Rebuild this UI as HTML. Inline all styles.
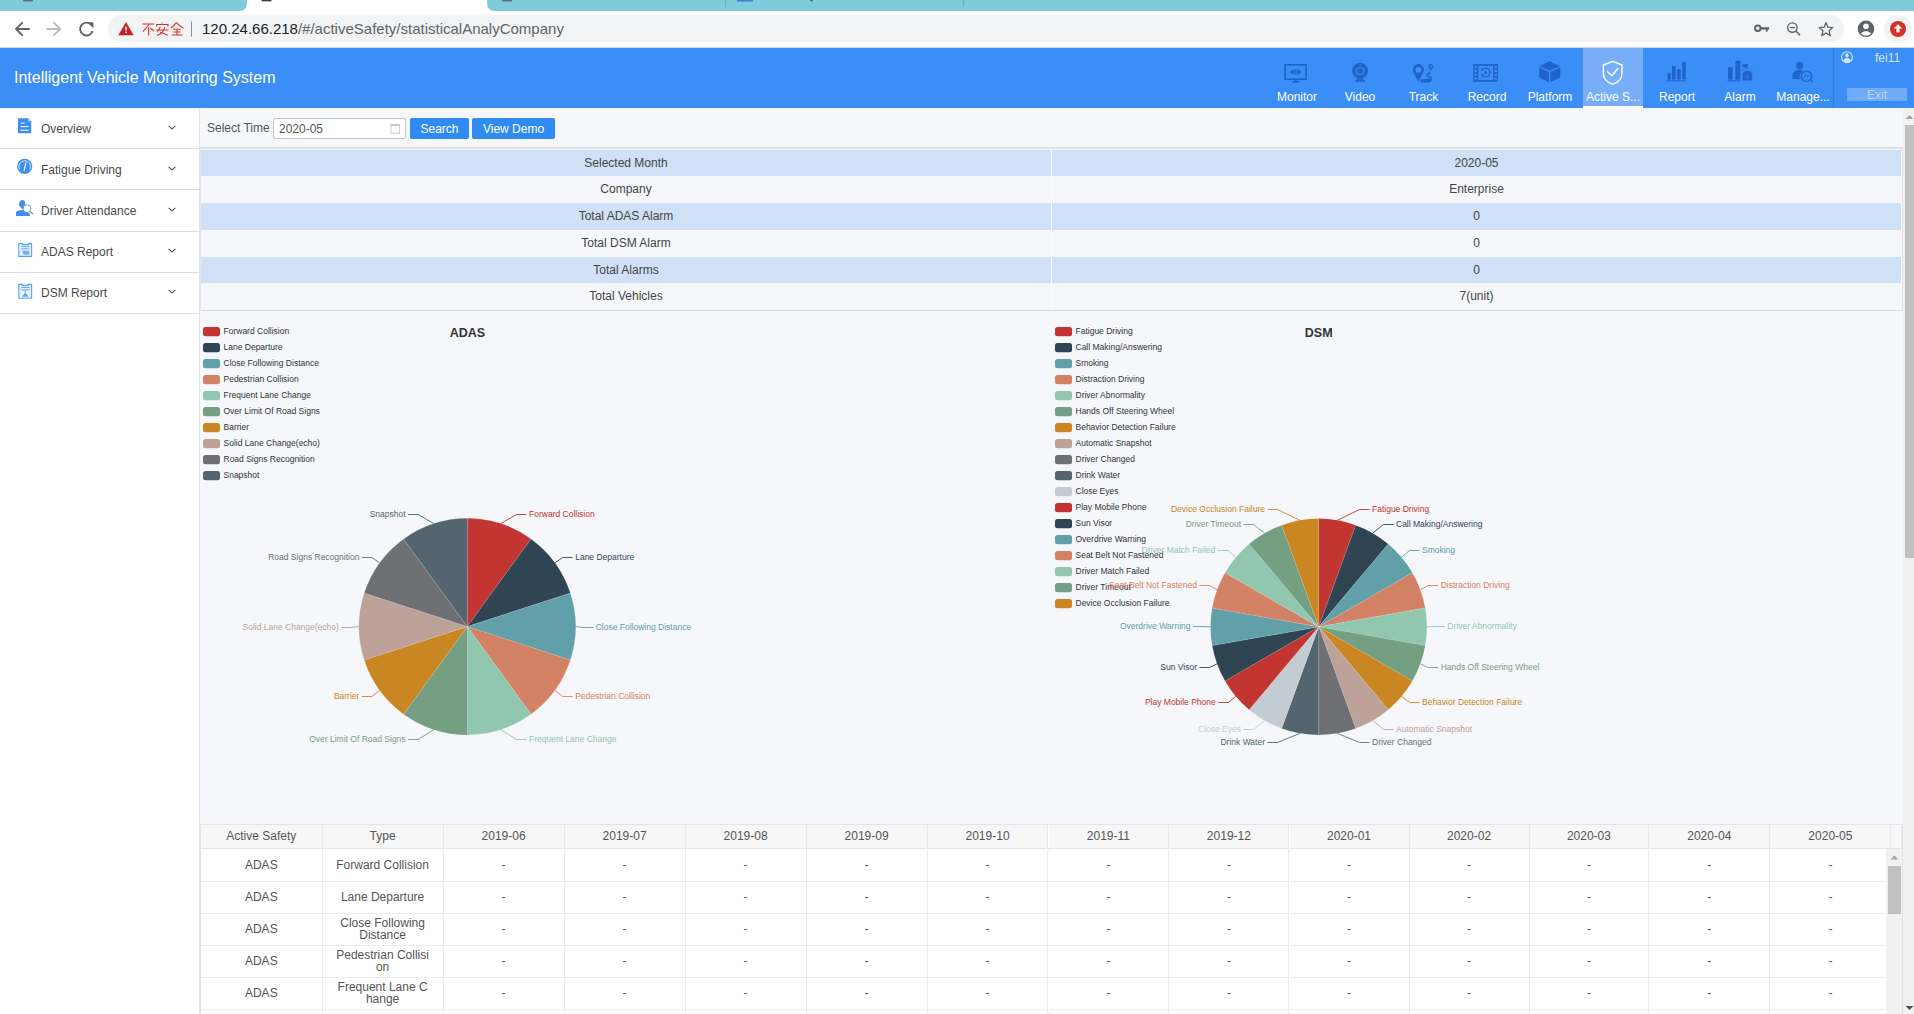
<!DOCTYPE html>
<html><head><meta charset="utf-8"><style>
*{margin:0;padding:0;box-sizing:border-box}
html,body{width:1914px;height:1014px;overflow:hidden;background:#f5f7fa;font-family:"Liberation Sans", sans-serif;position:relative}
.abs{position:absolute}
#tabs{position:absolute;left:0;top:0;width:1914px;height:11px;background:#7ecbdb}
#toolbar{position:absolute;left:0;top:11px;width:1914px;height:37px;background:#fff;border-bottom:1px solid #d6d6d6}
#omni{position:absolute;left:108px;top:15px;width:1736px;height:27px;border-radius:14px;background:#f1f3f4}
#url{position:absolute;left:202px;top:19px;font-size:15px;color:#5f6368;white-space:nowrap;line-height:20px}
#url b{font-weight:normal;color:#202124}
#header{position:absolute;left:0;top:48px;width:1914px;height:60px;background:#3a8ef6}
#title{position:absolute;left:14px;top:68px;font-size:16px;color:#fff;line-height:20px;white-space:nowrap}
.nav{position:absolute;top:48px;height:60px;width:60px;text-align:center}
.nav .lb{position:absolute;left:-10px;right:-10px;top:42px;font-size:12px;line-height:14px;color:#fff;white-space:nowrap}
.nav svg{position:absolute;left:18px;top:13px}
#side{position:absolute;left:0;top:108px;width:200px;height:906px;background:#fff;border-right:1px solid #e4e4e4}
.si{position:absolute;left:0;width:199px;height:41px;border-bottom:1px solid #dcdcdc}
.si .t{position:absolute;left:41px;top:14px;font-size:12px;line-height:14px;color:#4a4a4a}
.si .ch{position:absolute;left:168px;top:16px}
.si svg.ic{position:absolute;left:16px;top:10px}
.sr{position:absolute;left:201px;width:1700px;height:26.7px;font-size:12px;color:#444;line-height:26px}
.sr .c1{position:absolute;top:0;left:0;width:850px;text-align:center}
.sr .c2{position:absolute;left:850px;width:850px;text-align:center;border-left:1px solid #fdfdfe;height:100%}
.hc{position:absolute;top:825px;height:24px;line-height:22px;border-bottom:1px solid #e6e6e6;text-align:center;font-size:12px;color:#555;border-right:1px solid #e8e8e8;background:#f7f7f7}
.br{position:absolute;left:0;width:1886px;height:32px;overflow:hidden}
.bc{position:absolute;top:-1px;height:33px;display:flex;align-items:center;justify-content:center;text-align:center;font-size:12px;color:#555;border-right:1px solid #ececec;border-bottom:1px solid #ececec;background:#fff}
</style></head><body>
<svg class="abs" style="left:0;top:0" width="1914" height="12"><rect x="0" y="0" width="1914" height="11" fill="#fff"/><path d="M0,0 L247,0 L247,3 Q247,11 239,11 L0,11Z" fill="#7ecbdb"/><path d="M487,0 L1914,0 L1914,11 L495,11 Q487,11 487,3Z" fill="#7ecbdb"/>
<rect x="261.5" y="0" width="10" height="1.4" fill="#3c4043"/><rect x="23" y="0" width="10" height="1.4" fill="#55707a"/><rect x="502" y="0" width="10" height="1.4" fill="#55707a"/><rect x="737" y="0" width="16" height="1.6" fill="#4a7fd0"/><rect x="810" y="0" width="3" height="1.2" fill="#55707a"/><rect x="724.8" y="0" width="1" height="7" fill="#6aa9b8"/><rect x="962.8" y="0" width="1" height="7" fill="#6aa9b8"/></svg>
<div id="toolbar"></div>
<div id="omni"></div>
<svg style="position:absolute;left:0;top:0" width="1914" height="48"><path d="M29,29 L16.4,29 M22.2,22.8 L16,29 L22.2,35.2" fill="none" stroke="#5f6368" stroke-width="1.9" stroke-linecap="round" stroke-linejoin="round"/>
<path d="M47.2,29 L59.8,29 M54,22.8 L60.2,29 L54,35.2" fill="none" stroke="#bcbcbc" stroke-width="1.9" stroke-linecap="round" stroke-linejoin="round"/>
<path d="M91.6,25.2 A6.4,6.4 0 1 0 92.6,31" fill="none" stroke="#5f6368" stroke-width="1.9"/>
<path d="M87.4,22.2 L93.4,22.2 L93.4,28.2Z" fill="#5f6368"/>
<path d="M126,22.6 L133.2,35 L118.8,35Z" fill="#c5221f" stroke="#c5221f" stroke-width="0.6" stroke-linejoin="round"/>
<rect x="125.3" y="26.6" width="1.5" height="3.8" fill="#fff"/><rect x="125.3" y="31.6" width="1.5" height="1.5" fill="#fff"/>
<g fill="none" stroke="#d93025" stroke-width="1.05">
<path d="M142.4,24 L154.2,24 M149.4,24 L143,31.6 M148.6,27.2 L148.6,35.4 M150.2,28 L154,31"/>
<path d="M161.8,22.4 L162.4,23.6 M156.6,26.6 L156.6,24.4 L168,24.4 L168,26.6 M160.2,26.6 Q159.4,30 157,31.8 M156.4,30 L168.6,30 M164.6,27.4 Q163.6,33 157.2,35.4 M160,32 L167.8,35.2"/>
<path d="M176.4,22.6 Q173.4,26.4 170.6,28.2 M176.4,22.6 Q179.8,26.4 183.4,28.2 M173,29.2 L180.8,29.2 M173.4,32 L180.6,32 M171.6,35 L182.6,35 M177,29.2 L177,35"/>
</g>
<rect x="191" y="21.6" width="1" height="15" fill="#8d8f92"/>
<circle cx="1757.8" cy="28.2" r="2.8" fill="none" stroke="#5f6368" stroke-width="2"/>
<path d="M1760.6,27.2 L1769.2,27.2 L1769.2,29.6 L1767.8,29.6 L1767.8,31.4 L1765.8,31.4 L1765.8,29.6 L1760.6,29.6Z" fill="#5f6368"/>
<circle cx="1792.4" cy="27.6" r="4.7" fill="none" stroke="#5f6368" stroke-width="1.4"/>
<path d="M1790,27.6 L1794.8,27.6" stroke="#5f6368" stroke-width="1.3"/>
<path d="M1795.8,31 L1800,35.2" stroke="#5f6368" stroke-width="1.6"/>
<path d="M1826,22.6 L1827.9,27.2 L1832.8,27.6 L1829.1,30.8 L1830.2,35.6 L1826,33 L1821.8,35.6 L1822.9,30.8 L1819.2,27.6 L1824.1,27.2Z" fill="none" stroke="#5f6368" stroke-width="1.3" stroke-linejoin="round"/>
<circle cx="1866" cy="28.8" r="8.3" fill="#5f6368"/>
<circle cx="1866" cy="26.2" r="2.8" fill="#fff"/>
<path d="M1860.6,33.6 Q1866,28.6 1871.4,33.6 Q1866,38 1860.6,33.6Z" fill="#fff"/>
<circle cx="1898" cy="29" r="14" fill="#f1f3f4"/>
<circle cx="1898" cy="29" r="8" fill="#d93025"/>
<path d="M1898,24.2 L1902.2,28.4 L1899.6,28.4 L1899.6,32.6 L1896.4,32.6 L1896.4,28.4 L1893.8,28.4Z" fill="#fff"/></svg>
<div id="url"><b>120.24.66.218</b>/#/activeSafety/statisticalAnalyCompany</div>
<div id="header"></div>
<div id="title">Intelligent Vehicle Monitoring System</div>
<div class="nav" style="left:1267px"><div class="lb">Monitor</div></div>
<div class="nav" style="left:1330px"><div class="lb">Video</div></div>
<div class="nav" style="left:1393.5px"><div class="lb">Track</div></div>
<div class="nav" style="left:1457px"><div class="lb">Record</div></div>
<div class="nav" style="left:1520px"><div class="lb">Platform</div></div>
<div class="abs" style="left:1583px;top:48px;width:60px;height:60px;background:#78aef8;border-bottom:2px solid #fff"></div>
<div class="nav" style="left:1583px"><div class="lb">Active S...</div></div>
<div class="nav" style="left:1647px"><div class="lb">Report</div></div>
<div class="nav" style="left:1710px"><div class="lb">Alarm</div></div>
<div class="nav" style="left:1773px"><div class="lb">Manage...</div></div>
<svg style="position:absolute;left:0;top:0" width="1914" height="110"><g fill="none" stroke="#1f63cc" stroke-width="1.6">
<rect x="1285" y="64.8" width="21.2" height="14.4"/>
</g>
<path d="M1289.8,72 Q1295.6,66.2 1301.4,72 Q1295.6,77.8 1289.8,72Z" fill="#1f63cc"/>
<circle cx="1295.6" cy="72" r="1.9" fill="none" stroke="#3a8ef6" stroke-width="0.9"/>
<rect x="1294.6" y="79.5" width="2" height="2" fill="#1f63cc"/>
<rect x="1291.8" y="81" width="7.6" height="1.8" rx="0.8" fill="#1f63cc"/>
<circle cx="1360.1" cy="70.6" r="7.9" fill="#1f63cc"/>
<circle cx="1360.1" cy="71.2" r="3.8" fill="none" stroke="#4a93f0" stroke-width="1"/>
<circle cx="1360.1" cy="64.6" r="0.7" fill="#4a93f0"/>
<path d="M1358,77.4 L1362.2,77.4 L1363.4,79.6 L1356.8,79.6Z" fill="#1f63cc"/>
<rect x="1355.2" y="79.4" width="9.8" height="2.4" rx="0.8" fill="#1f63cc"/>
<path d="M1418.4,63.9 C1415.3,63.9 1412.8,66.4 1412.8,69.6 C1412.8,73.2 1418.4,81.4 1418.4,81.4 C1418.4,81.4 1423.9,73.2 1423.9,69.6 C1423.9,66.4 1421.5,63.9 1418.4,63.9Z" fill="#1f63cc"/>
<circle cx="1418.5" cy="69.8" r="2.9" fill="#3f90f4"/>
<path d="M1431,64.1 C1429.6,64.1 1428.4,65.2 1428.4,66.6 C1428.4,68.2 1431,70.6 1431,70.6 C1431,70.6 1433.4,68.2 1433.4,66.6 C1433.4,65.2 1432.3,64.1 1431,64.1Z" fill="#1f63cc"/>
<circle cx="1431" cy="66.4" r="1" fill="#3f90f4"/>
<path d="M1430.4,72.8 Q1425.6,74.2 1427.4,75.8 Q1431.8,77.4 1431.4,78.8" fill="none" stroke="#1f63cc" stroke-width="1.7"/>
<path d="M1420.4,79.4 L1431.8,78.2 Q1432.2,82.6 1427.6,82.6 L1420.4,82.6Z" fill="#1f63cc"/>
<rect x="1473.3" y="64" width="24.6" height="17.8" fill="#1f63cc"/>
<rect x="1478.4" y="65.8" width="14.6" height="14.2" fill="#3a8ef6"/>
<g fill="#3a8ef6">
<rect x="1474.6" y="66.2" width="2.4" height="2"/><rect x="1474.6" y="70" width="2.4" height="2"/><rect x="1474.6" y="73.8" width="2.4" height="2"/><rect x="1474.6" y="77.6" width="2.4" height="2"/>
<rect x="1494.4" y="66.2" width="2.4" height="2"/><rect x="1494.4" y="70" width="2.4" height="2"/><rect x="1494.4" y="73.8" width="2.4" height="2"/><rect x="1494.4" y="77.6" width="2.4" height="2"/>
</g>
<path d="M1482.4,69.4 A4.4,4.4 0 1 1 1481.6,74.4" fill="none" stroke="#1f63cc" stroke-width="1.3"/>
<path d="M1480.6,68.2 L1483.6,69.2 L1481.4,71.2Z" fill="#1f63cc"/>
<path d="M1484.4,70.6 L1487.4,72.5 L1484.4,74.4Z" fill="#1f63cc"/>
<path d="M1549.7,61.2 L1560,66.2 L1549.7,70.6 L1539.2,66.2Z" fill="#1f63cc"/>
<path d="M1539.2,67.6 L1549,72 L1549,82.2 L1539.6,77.6 Q1539,77.2 1539,76.4Z" fill="#1f63cc"/>
<path d="M1560.2,67.6 L1550.4,72 L1550.4,82.2 L1559.8,77.6 Q1560.4,77.2 1560.4,76.4Z" fill="#1f63cc"/>
<path d="M1612.7,61.4 L1622,65 L1622,73.2 C1622,78.8 1617.6,82.6 1612.7,84.2 C1607.8,82.6 1603.4,78.8 1603.4,73.2 L1603.4,65Z" fill="none" stroke="#fff" stroke-width="1.4" stroke-linejoin="round"/>
<path d="M1607.6,71.8 L1611.8,75.8 L1617.8,68.6" fill="none" stroke="#fff" stroke-width="1.5" stroke-linecap="round" stroke-linejoin="round"/>
<g fill="#1f63cc">
<rect x="1667.4" y="73.2" width="3.4" height="6.3" rx="0.8"/>
<rect x="1672" y="66" width="3.6" height="13.5" rx="0.8"/>
<rect x="1677.2" y="69" width="3.6" height="10.5" rx="0.8"/>
<rect x="1682.2" y="61.9" width="3.6" height="17.6" rx="0.8"/>
<rect x="1666.6" y="80.3" width="19.6" height="1.1"/>
</g>
<g fill="#1f63cc">
<rect x="1728" y="67" width="4.6" height="12.6"/>
<rect x="1735.4" y="61" width="5" height="18.6"/>
<rect x="1742.4" y="64" width="5.4" height="3.6"/>
<path d="M1742.4,80.6 L1742.4,75.6 A4.9,4.9 0 0 1 1752.2,75.6 L1752.2,80.6Z"/>
<rect x="1727.6" y="80.3" width="13" height="1.2"/>
</g>
<path d="M1747.8,73.6 L1746.2,76.6 L1748,76.6 L1746.8,79" fill="none" stroke="#3a8ef6" stroke-width="0.8"/>
<g stroke="#1f63cc" stroke-width="0.9"><path d="M1742,69.6 L1743.2,70.8 M1752.8,69.6 L1751.6,70.8 M1747.3,68 L1747.3,69.4"/></g>
<g fill="#1f63cc">
<circle cx="1799.6" cy="65.4" r="3.6"/>
<path d="M1792.4,79 L1792.4,75.2 Q1792.4,70.4 1799.6,69.8 Q1802.6,70 1803.6,71 A6.6,6.6 0 0 0 1799.8,79Z"/>
</g>
<circle cx="1806.4" cy="76.4" r="5.2" fill="none" stroke="#1f63cc" stroke-width="1.4"/>
<path d="M1803.6,77.6 L1805.6,74.8 L1808,76.6 L1809.4,75" fill="none" stroke="#1f63cc" stroke-width="0.9"/>
<path d="M1810.2,80.2 L1812.8,82" stroke="#1f63cc" stroke-width="1.4"/>
<rect x="1833" y="48" width="1" height="60" fill="#2f7ee0"/>
<circle cx="1847" cy="57.2" r="5.4" fill="none" stroke="#d3e6fd" stroke-width="1.1"/>
<ellipse cx="1847" cy="55.4" rx="1.7" ry="2.1" fill="#d3e6fd"/>
<path d="M1843.2,61.2 Q1843.6,58.4 1847,58 Q1850.4,58.4 1850.8,61.2 Q1847,63.6 1843.2,61.2Z" fill="#d3e6fd"/></svg>
<div class="abs" style="left:1875px;top:51px;font-size:12px;line-height:14px;color:#d3e6fd">fei11</div>
<div class="abs" style="left:1847px;top:88px;width:60px;height:13px;background:#72abf8;color:#b9d6fb;font-size:12px;line-height:15px;text-align:center">Exit</div>
<div id="side">
 <div class="si" style="top:0"><span class="t">Overview</span></div>
 <div class="si" style="top:41px"><span class="t">Fatigue Driving</span></div>
 <div class="si" style="top:82px;height:42px"><span class="t">Driver Attendance</span></div>
 <div class="si" style="top:124px"><span class="t" style="top:13px">ADAS Report</span></div>
 <div class="si" style="top:165px"><span class="t" style="top:13px">DSM Report</span></div>
</div>
<div class="abs" style="left:207px;top:121px;font-size:12px;line-height:14px;color:#555">Select Time</div>
<div class="abs" style="left:273px;top:118px;width:133px;height:21px;border:1px solid #c0c4cc;border-radius:2px;background:#fff"></div>
<svg style="position:absolute;left:0;top:108px;overflow:visible" width="200" height="200"><g transform="translate(0,-108)"><path d="M18,118.2 L28.2,118.2 L31.2,121.2 L31.2,133.2 L18,133.2Z" fill="#3d8ef3"/>
<path d="M28,118.2 L28,121.4 L31.2,121.4" fill="#a9cffb"/>
<g fill="#fff"><rect x="20.6" y="122.6" width="4" height="1"/><rect x="20.6" y="126.1" width="8" height="1"/><rect x="20.6" y="129.8" width="8" height="1"/></g>
<circle cx="24.7" cy="166.4" r="7.6" fill="#3d8ef3"/>
<path d="M19.6,169.4 A5.8,5.8 0 1 1 29.8,169.4" fill="none" stroke="#fff" stroke-width="0.8"/>
<path d="M24.2,170.4 L25.8,163" stroke="#fff" stroke-width="1.2" stroke-linecap="round"/>
<g fill="#3d8ef3">
<path d="M19.2,205.6 Q19,200.2 22.2,200 Q25,200 25,202.6 L25,206.2 Q24,208.6 22.6,209.6Z"/>
<path d="M16,216 L16,212.4 Q16.4,210.8 19,210.4 L23.4,209.8 Q25.6,212 29,212.6 L30.2,216Z"/>
</g>
<circle cx="27" cy="208.6" r="3.9" fill="#fff" stroke="#6a8fc8" stroke-width="0.9"/>
<path d="M29.8,211.6 L33,213.8" stroke="#5a6f99" stroke-width="1.1"/>
<path d="M18.8,243.6 L22.4,243.6 L22.4,244.6 L28.4,244.6 L28.4,243.6 L31.6,243.6 L31.6,256.4 L18.8,256.4Z" fill="#e8f3ff" stroke="#5a9ef5" stroke-width="1.1"/>
<g fill="#5a9ef5"><rect x="21.4" y="246.2" width="8" height="0.9"/><rect x="21.4" y="248.4" width="8" height="0.9"/><rect x="21.8" y="250.6" width="3" height="0.9"/><path d="M24.2,250.8 L29.2,250.8 L29.4,254.8 L23.6,254.8 L22.6,252.2Z" opacity="0.8"/></g>
<path d="M18.8,284.4 L22.4,284.4 L22.4,285.4 L28.4,285.4 L28.4,284.4 L31.6,284.4 L31.6,298.2 L18.8,298.2Z" fill="#e8f3ff" stroke="#5a9ef5" stroke-width="1.1"/>
<g fill="#5a9ef5"><rect x="21.2" y="287" width="8.4" height="0.9"/><rect x="21.2" y="289.4" width="8.4" height="1"/><path d="M24.8,290.4 L25.6,290.4 L25.6,293 L28.4,296.8 L22,296.8 L24.8,293Z"/></g>
<path d="M168.6,125.8 L172,129.0 L175.4,125.8" fill="none" stroke="#555" stroke-width="1.1"/>
<path d="M168.6,166.8 L172,170.0 L175.4,166.8" fill="none" stroke="#555" stroke-width="1.1"/>
<path d="M168.6,207.8 L172,211.0 L175.4,207.8" fill="none" stroke="#555" stroke-width="1.1"/>
<path d="M168.6,248.8 L172,252.0 L175.4,248.8" fill="none" stroke="#555" stroke-width="1.1"/>
<path d="M168.6,289.8 L172,293.0 L175.4,289.8" fill="none" stroke="#555" stroke-width="1.1"/></g></svg>
<svg class="abs" style="left:390px;top:123px" width="11" height="11"><rect x="1" y="1.5" width="8.6" height="8.6" fill="none" stroke="#c8c8c8" stroke-width="0.9"/><rect x="1" y="1.5" width="8.6" height="1.6" fill="#c8c8c8"/></svg>
<div class="abs" style="left:279px;top:122px;font-size:12px;line-height:14px;color:#555">2020-05</div>
<div class="abs" style="left:410px;top:118px;width:59px;height:21px;border-radius:2px;background:#2f8bef;color:#fff;font-size:12px;line-height:23px;text-align:center">Search</div>
<div class="abs" style="left:472px;top:118px;width:83px;height:21px;border-radius:2px;background:#2f8bef;color:#fff;font-size:12px;line-height:23px;text-align:center">View Demo</div>
<div class="abs" style="left:200px;top:147px;width:1703px;height:2px;background:#dcdfe4"></div>
<div class="abs" style="left:200px;top:149px;width:1703px;height:162px;border:1px solid #e3e5e8;border-top:0;border-bottom-color:#dcdcdc"></div>
<div class="sr" style="top:149.7px;background:#cfe0f7"><span class="c1">Selected Month</span><span class="c2">2020-05</span></div>
<div class="sr" style="top:176.4px;background:#f5f7fa"><span class="c1">Company</span><span class="c2">Enterprise</span></div>
<div class="sr" style="top:203.1px;background:#cfe0f7"><span class="c1">Total ADAS Alarm</span><span class="c2">0</span></div>
<div class="sr" style="top:229.8px;background:#f5f7fa"><span class="c1">Total DSM Alarm</span><span class="c2">0</span></div>
<div class="sr" style="top:256.5px;background:#cfe0f7"><span class="c1">Total Alarms</span><span class="c2">0</span></div>
<div class="sr" style="top:283.2px;background:#f5f7fa"><span class="c1">Total Vehicles</span><span class="c2">7(unit)</span></div>
<svg style="position:absolute;left:0;top:0" width="1914" height="1014" font-family='"Liberation Sans", sans-serif' font-size="8.5">
<g><rect x="203" y="327" width="17" height="9.3" rx="2.5" fill="#c23531"/>
<text x="223.5" y="333.9" fill="#333">Forward Collision</text>
<rect x="203" y="343" width="17" height="9.3" rx="2.5" fill="#2f4554"/>
<text x="223.5" y="349.9" fill="#333">Lane Departure</text>
<rect x="203" y="359" width="17" height="9.3" rx="2.5" fill="#61a0a8"/>
<text x="223.5" y="365.9" fill="#333">Close Following Distance</text>
<rect x="203" y="375" width="17" height="9.3" rx="2.5" fill="#d48265"/>
<text x="223.5" y="381.9" fill="#333">Pedestrian Collision</text>
<rect x="203" y="391" width="17" height="9.3" rx="2.5" fill="#91c7ae"/>
<text x="223.5" y="397.9" fill="#333">Frequent Lane Change</text>
<rect x="203" y="407" width="17" height="9.3" rx="2.5" fill="#749f83"/>
<text x="223.5" y="413.9" fill="#333">Over Limit Of Road Signs</text>
<rect x="203" y="423" width="17" height="9.3" rx="2.5" fill="#ca8622"/>
<text x="223.5" y="429.9" fill="#333">Barrier</text>
<rect x="203" y="439" width="17" height="9.3" rx="2.5" fill="#bda29a"/>
<text x="223.5" y="445.9" fill="#333">Solid Lane Change(echo)</text>
<rect x="203" y="455" width="17" height="9.3" rx="2.5" fill="#6e7074"/>
<text x="223.5" y="461.9" fill="#333">Road Signs Recognition</text>
<rect x="203" y="471" width="17" height="9.3" rx="2.5" fill="#546570"/>
<text x="223.5" y="477.9" fill="#333">Snapshot</text></g>
<text x="467.5" y="336.5" font-size="12.5" font-weight="bold" fill="#333" text-anchor="middle">ADAS</text>
<g><path d="M467.30,626.60L467.30,518.20A108.4,108.4 0 0 1 531.02,538.90Z" fill="#c23531" stroke="#fff" stroke-width="0.3" stroke-opacity="0.35"/>
<path d="M467.30,626.60L531.02,538.90A108.4,108.4 0 0 1 570.39,593.10Z" fill="#2f4554" stroke="#fff" stroke-width="0.3" stroke-opacity="0.35"/>
<path d="M467.30,626.60L570.39,593.10A108.4,108.4 0 0 1 570.39,660.10Z" fill="#61a0a8" stroke="#fff" stroke-width="0.3" stroke-opacity="0.35"/>
<path d="M467.30,626.60L570.39,660.10A108.4,108.4 0 0 1 531.02,714.30Z" fill="#d48265" stroke="#fff" stroke-width="0.3" stroke-opacity="0.35"/>
<path d="M467.30,626.60L531.02,714.30A108.4,108.4 0 0 1 467.30,735.00Z" fill="#91c7ae" stroke="#fff" stroke-width="0.3" stroke-opacity="0.35"/>
<path d="M467.30,626.60L467.30,735.00A108.4,108.4 0 0 1 403.58,714.30Z" fill="#749f83" stroke="#fff" stroke-width="0.3" stroke-opacity="0.35"/>
<path d="M467.30,626.60L403.58,714.30A108.4,108.4 0 0 1 364.21,660.10Z" fill="#ca8622" stroke="#fff" stroke-width="0.3" stroke-opacity="0.35"/>
<path d="M467.30,626.60L364.21,660.10A108.4,108.4 0 0 1 364.21,593.10Z" fill="#bda29a" stroke="#fff" stroke-width="0.3" stroke-opacity="0.35"/>
<path d="M467.30,626.60L364.21,593.10A108.4,108.4 0 0 1 403.58,538.90Z" fill="#6e7074" stroke="#fff" stroke-width="0.3" stroke-opacity="0.35"/>
<path d="M467.30,626.60L403.58,538.90A108.4,108.4 0 0 1 467.30,518.20Z" fill="#546570" stroke="#fff" stroke-width="0.3" stroke-opacity="0.35"/>
<polyline points="500.80,523.51 516.50,514.50 526.50,514.50" fill="none" stroke="#c23531" stroke-width="0.9"/>
<text x="529.00" y="516.99" fill="#c23531" text-anchor="start">Forward Collision</text>
<polyline points="555.00,562.88 562.70,557.50 572.70,557.50" fill="none" stroke="#2f4554" stroke-width="0.9"/>
<text x="575.20" y="560.01" fill="#2f4554" text-anchor="start">Lane Departure</text>
<polyline points="575.70,626.60 583.20,627.50 593.20,627.50" fill="none" stroke="#61a0a8" stroke-width="0.9"/>
<text x="595.70" y="629.60" fill="#61a0a8" text-anchor="start">Close Following Distance</text>
<polyline points="555.00,690.32 562.70,696.50 572.70,696.50" fill="none" stroke="#d48265" stroke-width="0.9"/>
<text x="575.20" y="699.19" fill="#d48265" text-anchor="start">Pedestrian Collision</text>
<polyline points="500.80,729.69 516.50,739.50 526.50,739.50" fill="none" stroke="#91c7ae" stroke-width="0.9"/>
<text x="529.00" y="742.21" fill="#91c7ae" text-anchor="start">Frequent Lane Change</text>
<polyline points="433.80,729.69 418.10,739.50 408.10,739.50" fill="none" stroke="#749f83" stroke-width="0.9"/>
<text x="405.60" y="742.21" fill="#749f83" text-anchor="end">Over Limit Of Road Signs</text>
<polyline points="379.60,690.32 371.90,696.50 361.90,696.50" fill="none" stroke="#ca8622" stroke-width="0.9"/>
<text x="359.40" y="699.19" fill="#ca8622" text-anchor="end">Barrier</text>
<polyline points="358.90,626.60 351.40,627.50 341.40,627.50" fill="none" stroke="#bda29a" stroke-width="0.9"/>
<text x="338.90" y="629.60" fill="#bda29a" text-anchor="end">Solid Lane Change(echo)</text>
<polyline points="379.60,562.88 371.90,557.50 361.90,557.50" fill="none" stroke="#6e7074" stroke-width="0.9"/>
<text x="359.40" y="560.01" fill="#6e7074" text-anchor="end">Road Signs Recognition</text>
<polyline points="433.80,523.51 418.10,514.50 408.10,514.50" fill="none" stroke="#546570" stroke-width="0.9"/>
<text x="405.60" y="516.99" fill="#546570" text-anchor="end">Snapshot</text></g>
<g><rect x="1055" y="327" width="17" height="9.3" rx="2.5" fill="#c23531"/>
<text x="1075.5" y="333.9" fill="#333">Fatigue Driving</text>
<rect x="1055" y="343" width="17" height="9.3" rx="2.5" fill="#2f4554"/>
<text x="1075.5" y="349.9" fill="#333">Call Making/Answering</text>
<rect x="1055" y="359" width="17" height="9.3" rx="2.5" fill="#61a0a8"/>
<text x="1075.5" y="365.9" fill="#333">Smoking</text>
<rect x="1055" y="375" width="17" height="9.3" rx="2.5" fill="#d48265"/>
<text x="1075.5" y="381.9" fill="#333">Distraction Driving</text>
<rect x="1055" y="391" width="17" height="9.3" rx="2.5" fill="#91c7ae"/>
<text x="1075.5" y="397.9" fill="#333">Driver Abnormality</text>
<rect x="1055" y="407" width="17" height="9.3" rx="2.5" fill="#749f83"/>
<text x="1075.5" y="413.9" fill="#333">Hands Off Steering Wheel</text>
<rect x="1055" y="423" width="17" height="9.3" rx="2.5" fill="#ca8622"/>
<text x="1075.5" y="429.9" fill="#333">Behavior Detection Failure</text>
<rect x="1055" y="439" width="17" height="9.3" rx="2.5" fill="#bda29a"/>
<text x="1075.5" y="445.9" fill="#333">Automatic Snapshot</text>
<rect x="1055" y="455" width="17" height="9.3" rx="2.5" fill="#6e7074"/>
<text x="1075.5" y="461.9" fill="#333">Driver Changed</text>
<rect x="1055" y="471" width="17" height="9.3" rx="2.5" fill="#546570"/>
<text x="1075.5" y="477.9" fill="#333">Drink Water</text>
<rect x="1055" y="487" width="17" height="9.3" rx="2.5" fill="#c4ccd3"/>
<text x="1075.5" y="493.9" fill="#333">Close Eyes</text>
<rect x="1055" y="503" width="17" height="9.3" rx="2.5" fill="#c23531"/>
<text x="1075.5" y="509.9" fill="#333">Play Mobile Phone</text>
<rect x="1055" y="519" width="17" height="9.3" rx="2.5" fill="#2f4554"/>
<text x="1075.5" y="525.9" fill="#333">Sun Visor</text>
<rect x="1055" y="535" width="17" height="9.3" rx="2.5" fill="#61a0a8"/>
<text x="1075.5" y="541.9" fill="#333">Overdrive Warning</text>
<rect x="1055" y="551" width="17" height="9.3" rx="2.5" fill="#d48265"/>
<text x="1075.5" y="557.9" fill="#333">Seat Belt Not Fastened</text>
<rect x="1055" y="567" width="17" height="9.3" rx="2.5" fill="#91c7ae"/>
<text x="1075.5" y="573.9" fill="#333">Driver Match Failed</text>
<rect x="1055" y="583" width="17" height="9.3" rx="2.5" fill="#749f83"/>
<text x="1075.5" y="589.9" fill="#333">Driver Timeout</text>
<rect x="1055" y="599" width="17" height="9.3" rx="2.5" fill="#ca8622"/>
<text x="1075.5" y="605.9" fill="#333">Device Occlusion Failure</text></g>
<text x="1318.7" y="336.5" font-size="12.5" font-weight="bold" fill="#333" text-anchor="middle">DSM</text>
<g><path d="M1318.70,626.80L1318.70,518.60A108.2,108.2 0 0 1 1355.71,525.13Z" fill="#c23531" stroke="#fff" stroke-width="0.3" stroke-opacity="0.35"/>
<path d="M1318.70,626.80L1355.71,525.13A108.2,108.2 0 0 1 1388.25,543.91Z" fill="#2f4554" stroke="#fff" stroke-width="0.3" stroke-opacity="0.35"/>
<path d="M1318.70,626.80L1388.25,543.91A108.2,108.2 0 0 1 1412.40,572.70Z" fill="#61a0a8" stroke="#fff" stroke-width="0.3" stroke-opacity="0.35"/>
<path d="M1318.70,626.80L1412.40,572.70A108.2,108.2 0 0 1 1425.26,608.01Z" fill="#d48265" stroke="#fff" stroke-width="0.3" stroke-opacity="0.35"/>
<path d="M1318.70,626.80L1425.26,608.01A108.2,108.2 0 0 1 1425.26,645.59Z" fill="#91c7ae" stroke="#fff" stroke-width="0.3" stroke-opacity="0.35"/>
<path d="M1318.70,626.80L1425.26,645.59A108.2,108.2 0 0 1 1412.40,680.90Z" fill="#749f83" stroke="#fff" stroke-width="0.3" stroke-opacity="0.35"/>
<path d="M1318.70,626.80L1412.40,680.90A108.2,108.2 0 0 1 1388.25,709.69Z" fill="#ca8622" stroke="#fff" stroke-width="0.3" stroke-opacity="0.35"/>
<path d="M1318.70,626.80L1388.25,709.69A108.2,108.2 0 0 1 1355.71,728.47Z" fill="#bda29a" stroke="#fff" stroke-width="0.3" stroke-opacity="0.35"/>
<path d="M1318.70,626.80L1355.71,728.47A108.2,108.2 0 0 1 1318.70,735.00Z" fill="#6e7074" stroke="#fff" stroke-width="0.3" stroke-opacity="0.35"/>
<path d="M1318.70,626.80L1318.70,735.00A108.2,108.2 0 0 1 1281.69,728.47Z" fill="#546570" stroke="#fff" stroke-width="0.3" stroke-opacity="0.35"/>
<path d="M1318.70,626.80L1281.69,728.47A108.2,108.2 0 0 1 1249.15,709.69Z" fill="#c4ccd3" stroke="#fff" stroke-width="0.3" stroke-opacity="0.35"/>
<path d="M1318.70,626.80L1249.15,709.69A108.2,108.2 0 0 1 1225.00,680.90Z" fill="#c23531" stroke="#fff" stroke-width="0.3" stroke-opacity="0.35"/>
<path d="M1318.70,626.80L1225.00,680.90A108.2,108.2 0 0 1 1212.14,645.59Z" fill="#2f4554" stroke="#fff" stroke-width="0.3" stroke-opacity="0.35"/>
<path d="M1318.70,626.80L1212.14,645.59A108.2,108.2 0 0 1 1212.14,608.01Z" fill="#61a0a8" stroke="#fff" stroke-width="0.3" stroke-opacity="0.35"/>
<path d="M1318.70,626.80L1212.14,608.01A108.2,108.2 0 0 1 1225.00,572.70Z" fill="#d48265" stroke="#fff" stroke-width="0.3" stroke-opacity="0.35"/>
<path d="M1318.70,626.80L1225.00,572.70A108.2,108.2 0 0 1 1249.15,543.91Z" fill="#91c7ae" stroke="#fff" stroke-width="0.3" stroke-opacity="0.35"/>
<path d="M1318.70,626.80L1249.15,543.91A108.2,108.2 0 0 1 1281.69,525.13Z" fill="#749f83" stroke="#fff" stroke-width="0.3" stroke-opacity="0.35"/>
<path d="M1318.70,626.80L1281.69,525.13A108.2,108.2 0 0 1 1318.70,518.60Z" fill="#ca8622" stroke="#fff" stroke-width="0.3" stroke-opacity="0.35"/>
<polyline points="1337.49,520.24 1359.50,509.50 1369.50,509.50" fill="none" stroke="#c23531" stroke-width="0.9"/>
<text x="1372.00" y="512.40" fill="#c23531" text-anchor="start">Fatigue Driving</text>
<polyline points="1372.80,533.10 1383.50,524.50 1393.50,524.50" fill="none" stroke="#2f4554" stroke-width="0.9"/>
<text x="1396.00" y="526.50" fill="#2f4554" text-anchor="start">Call Making/Answering</text>
<polyline points="1401.59,557.25 1409.50,550.50 1419.50,550.50" fill="none" stroke="#61a0a8" stroke-width="0.9"/>
<text x="1422.00" y="553.20" fill="#61a0a8" text-anchor="start">Smoking</text>
<polyline points="1420.37,589.79 1428.20,585.50 1438.20,585.50" fill="none" stroke="#d48265" stroke-width="0.9"/>
<text x="1440.70" y="588.30" fill="#d48265" text-anchor="start">Distraction Driving</text>
<polyline points="1426.90,626.80 1434.80,626.50 1444.80,626.50" fill="none" stroke="#91c7ae" stroke-width="0.9"/>
<text x="1447.30" y="629.00" fill="#91c7ae" text-anchor="start">Driver Abnormality</text>
<polyline points="1420.37,663.81 1428.20,667.50 1438.20,667.50" fill="none" stroke="#749f83" stroke-width="0.9"/>
<text x="1440.70" y="669.70" fill="#749f83" text-anchor="start">Hands Off Steering Wheel</text>
<polyline points="1401.59,696.35 1409.50,702.50 1419.50,702.50" fill="none" stroke="#ca8622" stroke-width="0.9"/>
<text x="1422.00" y="704.90" fill="#ca8622" text-anchor="start">Behavior Detection Failure</text>
<polyline points="1372.80,720.50 1383.50,729.50 1393.50,729.50" fill="none" stroke="#bda29a" stroke-width="0.9"/>
<text x="1396.00" y="731.80" fill="#bda29a" text-anchor="start">Automatic Snapshot</text>
<polyline points="1337.49,733.36 1359.50,742.50 1369.50,742.50" fill="none" stroke="#6e7074" stroke-width="0.9"/>
<text x="1372.00" y="745.30" fill="#6e7074" text-anchor="start">Driver Changed</text>
<polyline points="1299.91,733.36 1277.50,742.50 1267.50,742.50" fill="none" stroke="#546570" stroke-width="0.9"/>
<text x="1265.00" y="745.30" fill="#546570" text-anchor="end">Drink Water</text>
<polyline points="1264.60,720.50 1253.50,729.50 1243.50,729.50" fill="none" stroke="#c4ccd3" stroke-width="0.9"/>
<text x="1241.00" y="731.80" fill="#c4ccd3" text-anchor="end">Close Eyes</text>
<polyline points="1235.81,696.35 1228.30,702.50 1218.30,702.50" fill="none" stroke="#c23531" stroke-width="0.9"/>
<text x="1215.80" y="704.90" fill="#c23531" text-anchor="end">Play Mobile Phone</text>
<polyline points="1217.03,663.81 1209.50,667.50 1199.50,667.50" fill="none" stroke="#2f4554" stroke-width="0.9"/>
<text x="1197.00" y="669.70" fill="#2f4554" text-anchor="end">Sun Visor</text>
<polyline points="1210.50,626.80 1203.00,626.50 1193.00,626.50" fill="none" stroke="#61a0a8" stroke-width="0.9"/>
<text x="1190.50" y="629.00" fill="#61a0a8" text-anchor="end">Overdrive Warning</text>
<polyline points="1217.03,589.79 1209.50,585.50 1199.50,585.50" fill="none" stroke="#d48265" stroke-width="0.9"/>
<text x="1197.00" y="588.30" fill="#d48265" text-anchor="end">Seat Belt Not Fastened</text>
<polyline points="1235.81,557.25 1227.80,550.50 1217.80,550.50" fill="none" stroke="#91c7ae" stroke-width="0.9"/>
<text x="1215.30" y="553.20" fill="#91c7ae" text-anchor="end">Driver Match Failed</text>
<polyline points="1264.60,533.10 1253.50,524.50 1243.50,524.50" fill="none" stroke="#749f83" stroke-width="0.9"/>
<text x="1241.00" y="526.50" fill="#749f83" text-anchor="end">Driver Timeout</text>
<polyline points="1299.91,520.24 1277.50,509.50 1267.50,509.50" fill="none" stroke="#ca8622" stroke-width="0.9"/>
<text x="1265.00" y="512.40" fill="#ca8622" text-anchor="end">Device Occlusion Failure</text></g>
</svg>
<div class="abs" style="left:200px;top:824px;width:1703px;height:190px;border:1px solid #e3e3e3;background:#fff"></div>
<div class="hc" style="left:201.0px;width:121.6px">Active Safety</div><div class="hc" style="left:322.6px;width:121.0px">Type</div><div class="hc" style="left:443.6px;width:121.0px">2019-06</div><div class="hc" style="left:564.6px;width:121.0px">2019-07</div><div class="hc" style="left:685.6px;width:121.0px">2019-08</div><div class="hc" style="left:806.6px;width:121.0px">2019-09</div><div class="hc" style="left:927.6px;width:120.9px">2019-10</div><div class="hc" style="left:1048.5px;width:120.8px">2019-11</div><div class="hc" style="left:1169.3px;width:120.2px">2019-12</div><div class="hc" style="left:1289.5px;width:120.0px">2020-01</div><div class="hc" style="left:1409.5px;width:120.1px">2020-02</div><div class="hc" style="left:1529.6px;width:119.7px">2020-03</div><div class="hc" style="left:1649.3px;width:121.0px">2020-04</div><div class="hc" style="left:1770.3px;width:121.2px">2020-05</div>
<div class="hc" style="left:1891px;width:11px"></div>
<div class="br" style="top:850.0px"><div class="bc" style="left:201.0px;width:121.6px">ADAS</div><div class="bc" style="left:322.6px;width:121.0px;line-height:11.5px;padding-top:1px">Forward Collision</div><div class="bc" style="left:443.6px;width:121.0px">-</div><div class="bc" style="left:564.6px;width:121.0px">-</div><div class="bc" style="left:685.6px;width:121.0px">-</div><div class="bc" style="left:806.6px;width:121.0px">-</div><div class="bc" style="left:927.6px;width:120.9px">-</div><div class="bc" style="left:1048.5px;width:120.8px">-</div><div class="bc" style="left:1169.3px;width:120.2px">-</div><div class="bc" style="left:1289.5px;width:120.0px">-</div><div class="bc" style="left:1409.5px;width:120.1px">-</div><div class="bc" style="left:1529.6px;width:119.7px">-</div><div class="bc" style="left:1649.3px;width:121.0px">-</div><div class="bc" style="left:1770.3px;width:121.2px">-</div></div>
<div class="br" style="top:882.0px"><div class="bc" style="left:201.0px;width:121.6px">ADAS</div><div class="bc" style="left:322.6px;width:121.0px;line-height:11.5px;padding-top:1px">Lane Departure</div><div class="bc" style="left:443.6px;width:121.0px">-</div><div class="bc" style="left:564.6px;width:121.0px">-</div><div class="bc" style="left:685.6px;width:121.0px">-</div><div class="bc" style="left:806.6px;width:121.0px">-</div><div class="bc" style="left:927.6px;width:120.9px">-</div><div class="bc" style="left:1048.5px;width:120.8px">-</div><div class="bc" style="left:1169.3px;width:120.2px">-</div><div class="bc" style="left:1289.5px;width:120.0px">-</div><div class="bc" style="left:1409.5px;width:120.1px">-</div><div class="bc" style="left:1529.6px;width:119.7px">-</div><div class="bc" style="left:1649.3px;width:121.0px">-</div><div class="bc" style="left:1770.3px;width:121.2px">-</div></div>
<div class="br" style="top:914.0px"><div class="bc" style="left:201.0px;width:121.6px">ADAS</div><div class="bc" style="left:322.6px;width:121.0px;line-height:11.5px;padding-top:1px">Close Following<br>Distance</div><div class="bc" style="left:443.6px;width:121.0px">-</div><div class="bc" style="left:564.6px;width:121.0px">-</div><div class="bc" style="left:685.6px;width:121.0px">-</div><div class="bc" style="left:806.6px;width:121.0px">-</div><div class="bc" style="left:927.6px;width:120.9px">-</div><div class="bc" style="left:1048.5px;width:120.8px">-</div><div class="bc" style="left:1169.3px;width:120.2px">-</div><div class="bc" style="left:1289.5px;width:120.0px">-</div><div class="bc" style="left:1409.5px;width:120.1px">-</div><div class="bc" style="left:1529.6px;width:119.7px">-</div><div class="bc" style="left:1649.3px;width:121.0px">-</div><div class="bc" style="left:1770.3px;width:121.2px">-</div></div>
<div class="br" style="top:946.0px"><div class="bc" style="left:201.0px;width:121.6px">ADAS</div><div class="bc" style="left:322.6px;width:121.0px;line-height:11.5px;padding-top:1px">Pedestrian Collisi<br>on</div><div class="bc" style="left:443.6px;width:121.0px">-</div><div class="bc" style="left:564.6px;width:121.0px">-</div><div class="bc" style="left:685.6px;width:121.0px">-</div><div class="bc" style="left:806.6px;width:121.0px">-</div><div class="bc" style="left:927.6px;width:120.9px">-</div><div class="bc" style="left:1048.5px;width:120.8px">-</div><div class="bc" style="left:1169.3px;width:120.2px">-</div><div class="bc" style="left:1289.5px;width:120.0px">-</div><div class="bc" style="left:1409.5px;width:120.1px">-</div><div class="bc" style="left:1529.6px;width:119.7px">-</div><div class="bc" style="left:1649.3px;width:121.0px">-</div><div class="bc" style="left:1770.3px;width:121.2px">-</div></div>
<div class="br" style="top:978.0px"><div class="bc" style="left:201.0px;width:121.6px">ADAS</div><div class="bc" style="left:322.6px;width:121.0px;line-height:11.5px;padding-top:1px">Frequent Lane C<br>hange</div><div class="bc" style="left:443.6px;width:121.0px">-</div><div class="bc" style="left:564.6px;width:121.0px">-</div><div class="bc" style="left:685.6px;width:121.0px">-</div><div class="bc" style="left:806.6px;width:121.0px">-</div><div class="bc" style="left:927.6px;width:120.9px">-</div><div class="bc" style="left:1048.5px;width:120.8px">-</div><div class="bc" style="left:1169.3px;width:120.2px">-</div><div class="bc" style="left:1289.5px;width:120.0px">-</div><div class="bc" style="left:1409.5px;width:120.1px">-</div><div class="bc" style="left:1529.6px;width:119.7px">-</div><div class="bc" style="left:1649.3px;width:121.0px">-</div><div class="bc" style="left:1770.3px;width:121.2px">-</div></div>
<div class="br" style="top:1010.0px"><div class="bc" style="left:201.0px;width:121.6px">ADAS</div><div class="bc" style="left:322.6px;width:121.0px;line-height:11.5px;padding-top:1px">Over Limit Of Ro<br>ad Signs</div><div class="bc" style="left:443.6px;width:121.0px">-</div><div class="bc" style="left:564.6px;width:121.0px">-</div><div class="bc" style="left:685.6px;width:121.0px">-</div><div class="bc" style="left:806.6px;width:121.0px">-</div><div class="bc" style="left:927.6px;width:120.9px">-</div><div class="bc" style="left:1048.5px;width:120.8px">-</div><div class="bc" style="left:1169.3px;width:120.2px">-</div><div class="bc" style="left:1289.5px;width:120.0px">-</div><div class="bc" style="left:1409.5px;width:120.1px">-</div><div class="bc" style="left:1529.6px;width:119.7px">-</div><div class="bc" style="left:1649.3px;width:121.0px">-</div><div class="bc" style="left:1770.3px;width:121.2px">-</div></div><div class="abs" style="left:321.6px;top:848px;width:1px;height:3px;background:#ececec"></div><div class="abs" style="left:442.6px;top:848px;width:1px;height:3px;background:#ececec"></div><div class="abs" style="left:563.6px;top:848px;width:1px;height:3px;background:#ececec"></div><div class="abs" style="left:684.6px;top:848px;width:1px;height:3px;background:#ececec"></div><div class="abs" style="left:805.6px;top:848px;width:1px;height:3px;background:#ececec"></div><div class="abs" style="left:926.6px;top:848px;width:1px;height:3px;background:#ececec"></div><div class="abs" style="left:1047.5px;top:848px;width:1px;height:3px;background:#ececec"></div><div class="abs" style="left:1168.3px;top:848px;width:1px;height:3px;background:#ececec"></div><div class="abs" style="left:1288.5px;top:848px;width:1px;height:3px;background:#ececec"></div><div class="abs" style="left:1408.5px;top:848px;width:1px;height:3px;background:#ececec"></div><div class="abs" style="left:1528.6px;top:848px;width:1px;height:3px;background:#ececec"></div><div class="abs" style="left:1648.3px;top:848px;width:1px;height:3px;background:#ececec"></div><div class="abs" style="left:1769.3px;top:848px;width:1px;height:3px;background:#ececec"></div>
<div class="abs" style="left:1886px;top:849px;width:16px;height:165px;background:#f1f1f1"></div>
<div class="abs" style="left:1888px;top:866px;width:13px;height:48px;background:#c1c1c1"></div>
<div class="abs" style="left:1903px;top:108px;width:11px;height:906px;background:#f1f1f1"></div>
<div class="abs" style="left:1905px;top:125px;width:9px;height:433px;background:#c1c1c1"></div>
<svg class="abs" style="left:0;top:0" width="1914" height="1014"><path d="M1905.5,119 L1913.5,119 L1909.5,115Z" fill="#a3a3a3"/><path d="M1905.5,1006 L1913.5,1006 L1909.5,1010Z" fill="#505050"/><path d="M1890.4,859.6 L1898.4,859.6 L1894.4,855.6Z" fill="#a3a3a3"/></svg>
</body></html>
